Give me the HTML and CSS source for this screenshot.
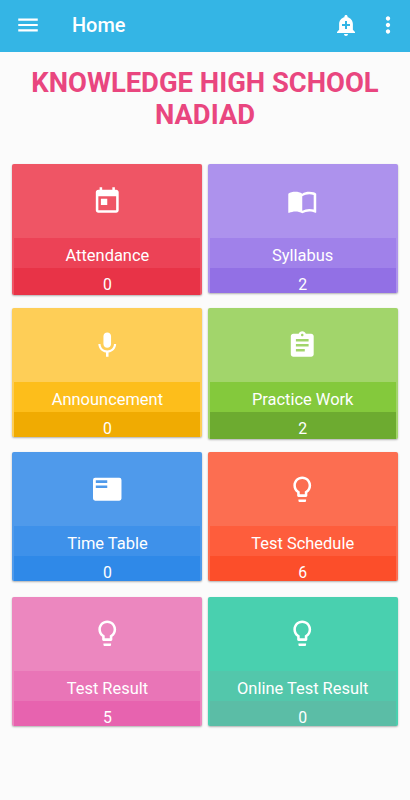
FILE: index.html
```html
<!DOCTYPE html>
<html lang="en">
<head>
<meta charset="utf-8">
<title>Home</title>
<link rel="stylesheet" href="styles.css">
</head>
<body>
<header class="bar">
  <svg class="menu" viewBox="0 0 24 24"><path d="M3 18h18v-2H3v2zm0-5h18v-2H3v2zm0-7v2h18V6H3z"/></svg>
  <span class="heading">Home</span>
  <svg class="bell" viewBox="0 0 24 24"><path d="M10.01 21.01c0 1.1.89 1.99 1.99 1.99s1.99-.89 1.99-1.99h-3.98zm8.87-4.19V11c0-3.25-2.25-5.97-5.29-6.69v-.72C13.59 2.71 12.88 2 12 2s-1.59.71-1.59 1.59v.72C7.37 5.03 5.12 7.75 5.12 11v5.82L3 18.94V20h18v-1.06l-2.12-2.12zM16 13.01h-3v3h-2v-3H8V11h3V8h2v3h3v2.01z"/></svg>
  <svg class="more" viewBox="0 0 24 24"><path d="M12 8c1.1 0 2-.9 2-2s-.9-2-2-2-2 .9-2 2 .9 2 2 2zm0 2c-1.1 0-2 .9-2 2s.9 2 2 2 2-.9 2-2-.9-2-2-2zm0 6c-1.1 0-2 .9-2 2s.9 2 2 2 2-.9 2-2-.9-2-2-2z"/></svg>
</header>
<h1 class="school">KNOWLEDGE HIGH SCHOOL<br>NADIAD</h1>
<main class="grid">
  <section class="card red tall">
    <div class="top"><svg viewBox="0 0 24 24"><path d="M19 3h-1V1h-2v2H8V1H6v2H5c-1.11 0-1.99.9-1.99 2L3 19c0 1.1.89 2 2 2h14c1.1 0 2-.9 2-2V5c0-1.100-.9-2-2-2zm0 16H5V8h14v11zM7 10h5v5H7z"/></svg></div>
    <div class="label">Attendance</div><div class="count">0</div>
  </section>
  <section class="card purple">
    <div class="top"><svg viewBox="0 0 24 24"><path d="M21 5c-1.110-.35-2.330-.5-3.500-.5-1.950 0-4.050.4-5.500 1.500-1.450-1.100-3.550-1.500-5.500-1.500S2.450 4.900 1 6v14.650c0 .25.25.5.5.5.1 0 .15-.05.25-.05C3.100 20.450 5.050 20 6.500 20c1.950 0 4.050.4 5.500 1.500 1.350-.85 3.800-1.500 5.500-1.500 1.650 0 3.350.3 4.750 1.050.1.05.15.05.25.05.25 0 .5-.25.5-.5V6c-.6-.45-1.250-.75-2-1zm0 13.500c-1.100-.35-2.300-.5-3.500-.5-1.700 0-4.150.65-5.500 1.500V8c1.350-.85 3.800-1.500 5.500-1.500 1.200 0 2.400.15 3.500.5v11.500z"/></svg></div>
    <div class="label">Syllabus</div><div class="count">2</div>
  </section>
  <section class="card yellow">
    <div class="top"><svg viewBox="0 0 24 24"><path d="M12 14c1.660 0 2.990-1.340 2.990-3L15 5c0-1.660-1.340-3-3-3S9 3.340 9 5v6c0 1.660 1.340 3 3 3zm5.300-3c0 3-2.540 5.100-5.300 5.100S6.700 14 6.700 11H5c0 3.410 2.720 6.230 6 6.720V21h2v-3.280c3.280-.48 6-3.300 6-6.720h-1.700z"/></svg></div>
    <div class="label">Announcement</div><div class="count">0</div>
  </section>
  <section class="card green tall">
    <div class="top"><svg viewBox="0 0 24 24"><path d="M19 3h-4.180C14.400 1.840 13.300 1 12 1c-1.300 0-2.400.84-2.820 2H5c-1.100 0-2 .9-2 2v14c0 1.100.9 2 2 2h14c1.100 0 2-.9 2-2V5c0-1.100-.9-2-2-2zm-7 0c.55 0 1 .45 1 1s-.45 1-1 1-1-.45-1-1 .45-1 1-1zm2 14H7v-2h7v2zm3-4H7v-2h10v2zm0-4H7V7h10v2z"/></svg></div>
    <div class="label">Practice Work</div><div class="count">2</div>
  </section>
  <section class="card blue">
    <div class="top"><svg viewBox="0 0 24 24"><path fill-rule="evenodd" d="M2.500 3h19a1.700 1.700 0 0 1 1.700 1.700v14.600a1.700 1.700 0 0 1-1.700 1.700h-19a1.700 1.700 0 0 1-1.700-1.700V4.700A1.700 1.700 0 0 1 2.500 3zm.5 2v2h9V5zm0 4v2h9V9z"/></svg></div>
    <div class="label">Time Table</div><div class="count">0</div>
  </section>
  <section class="card orange">
    <div class="top"><svg viewBox="0 0 24 24"><path d="M9 21c0 .55.45 1 1 1h4c.55 0 1-.45 1-1v-1H9v1zm3-19C8.140 2 5 5.140 5 9c0 2.380 1.190 4.470 3 5.740V17c0 .55.45 1 1 1h6c.55 0 1-.45 1-1v-2.260c1.810-1.270 3-3.360 3-5.740 0-3.860-3.140-7-7-7zm2.850 11.100l-.85.6V16h-4v-2.300l-.85-.6C7.800 12.160 7 10.630 7 9c0-2.760 2.240-5 5-5s5 2.240 5 5c0 1.630-.8 3.160-2.150 4.100z"/></svg></div>
    <div class="label">Test Schedule</div><div class="count">6</div>
  </section>
  <section class="card pink">
    <div class="top"><svg viewBox="0 0 24 24"><path d="M9 21c0 .55.45 1 1 1h4c.55 0 1-.45 1-1v-1H9v1zm3-19C8.140 2 5 5.140 5 9c0 2.380 1.190 4.470 3 5.740V17c0 .55.45 1 1 1h6c.55 0 1-.45 1-1v-2.260c1.810-1.270 3-3.360 3-5.740 0-3.860-3.140-7-7-7zm2.850 11.100l-.85.6V16h-4v-2.300l-.85-.6C7.800 12.160 7 10.630 7 9c0-2.760 2.240-5 5-5s5 2.240 5 5c0 1.630-.8 3.160-2.150 4.100z"/></svg></div>
    <div class="label">Test Result</div><div class="count">5</div>
  </section>
  <section class="card teal">
    <div class="top"><svg viewBox="0 0 24 24"><path d="M9 21c0 .55.45 1 1 1h4c.55 0 1-.45 1-1v-1H9v1zm3-19C8.140 2 5 5.140 5 9c0 2.380 1.190 4.470 3 5.740V17c0 .55.45 1 1 1h6c.55 0 1-.45 1-1v-2.260c1.810-1.270 3-3.360 3-5.740 0-3.860-3.140-7-7-7zm2.850 11.100l-.85.6V16h-4v-2.300l-.85-.6C7.800 12.160 7 10.630 7 9c0-2.760 2.240-5 5-5s5 2.240 5 5c0 1.630-.8 3.160-2.150 4.100z"/></svg></div>
    <div class="label">Online Test Result</div><div class="count">0</div>
  </section>
</main>
</body>
</html>
```
FILE: styles.css
```css
* { box-sizing: border-box; }
body {
  margin: 0;
  height: 800px;
  background: #fbfbfb;
  font-family: Roboto, sans-serif;
  overflow: hidden;
}
svg { display: block; fill: #fff; flex: none; }
.bar {
  display: flex;
  align-items: center;
  height: 52px;
  padding: 0 9px 3px 15px;
  background: #34b5e5;
}
.menu { width: 26px; height: 26px; }
.heading {
  flex: 1;
  margin-left: 31px;
  padding-top: 3px;
  font-size: 19.900px;
  font-weight: 500;
  line-height: 24px;
  color: #fff;
}
.bell { width: 24px; height: 24px; margin-right: 17px; }
.more { width: 26px; height: 26px; }
.school {
  margin: 15px 0 0;
  font-size: 27.400px;
  font-weight: 700;
  line-height: 32px;
  text-align: center;
  color: #e9467f;
}
.grid {
  display: grid;
  grid-template-columns: 190px 190px;
  grid-auto-rows: 144.2px;
  column-gap: 5.300px;
  align-items: start;
  margin: 33px 0 0 12.400px;
}
.card {
  height: 129px;
  padding: 0 2px;
  border-radius: 2px;
  overflow: hidden;
  display: flex;
  flex-direction: column;
  background: var(--a);
  color: #fff;
  text-align: center;
  box-shadow: 0 1px 2px rgba(0, 0, 0, .3);
}
.tall { height: 131px; }
.top { flex: none; height: 74px; display: flex; justify-content: center; align-items: center; }
.top svg { width: 30.500px; height: 30.500px; }
.label {
  flex: none;
  height: 30px;
  background: var(--b);
  font-size: 16.450px;
  line-height: 35px;
}
.count {
  flex: 1 1 0;
  min-height: 0;
  background: var(--c);
  font-size: 15.800px;
  line-height: 33px;
}
.red { --a: #ef5565; --b: #ec4256; --c: #e83347; }
.purple { --a: #ad92ed; --b: #a081ea; --c: #9270e5; }
.yellow { --a: #fece57; --b: #fdbe1b; --c: #f0ab02; }
.green { --a: #a2d56b; --b: #84c93c; --c: #6dab30; }
.blue { --a: #4f9aeb; --b: #3e91ea; --c: #2f89e8; }
.orange { --a: #fc6e51; --b: #fe5d3c; --c: #fc4e2a; }
.pink { --a: #ec87bf; --b: #e975b7; --c: #e763af; }
.teal { --a: #49d0af; --b: #53c7ab; --c: #5bbda6; }
```
